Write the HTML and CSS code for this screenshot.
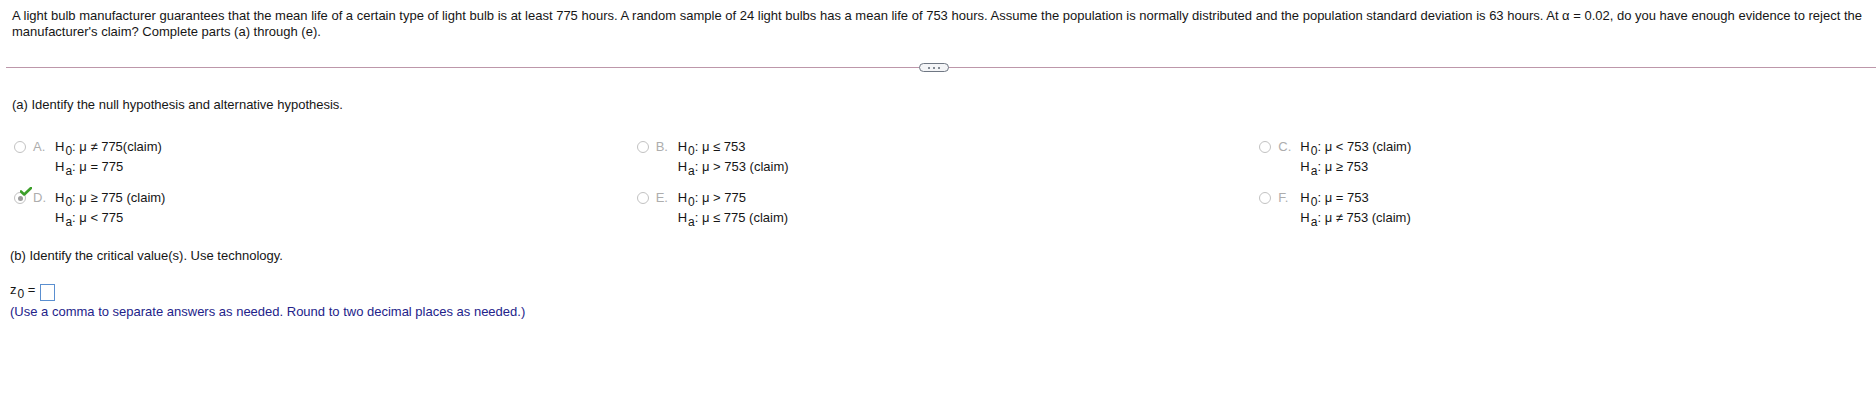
FILE: index.html
```html
<!DOCTYPE html>
<html lang="en">
<head>
<meta charset="utf-8">
<title>Hypothesis test</title>
<link rel="stylesheet" href="styles.css">
</head>
<body>
<div class="page">
  <p class="question">A light bulb manufacturer guarantees that the mean life of a certain type of light bulb is at least 775 hours. A random sample of 24 light bulbs has a mean life of 753 hours. Assume the population is normally distributed and the population standard deviation is 63 hours. At α = 0.02, do you have enough evidence to reject the manufacturer's claim? Complete parts (a) through (e).</p>

  <div class="divider">
    <span class="pill"><i></i><i></i><i></i></span>
  </div>

  <p class="part part-a">(a) Identify the null hypothesis and alternative hypothesis.</p>

  <div class="options">
    <div class="option">
      <span class="radio"></span><span class="letter">A.</span>
      <div class="hyp">
        <div>H<sub>0</sub>: μ ≠ 775(claim)</div>
        <div>H<sub>a</sub>: μ = 775</div>
      </div>
    </div>
    <div class="option">
      <span class="radio"></span><span class="letter">B.</span>
      <div class="hyp">
        <div>H<sub>0</sub>: μ ≤ 753</div>
        <div>H<sub>a</sub>: μ &gt; 753 (claim)</div>
      </div>
    </div>
    <div class="option">
      <span class="radio"></span><span class="letter">C.</span>
      <div class="hyp">
        <div>H<sub>0</sub>: μ &lt; 753 (claim)</div>
        <div>H<sub>a</sub>: μ ≥ 753</div>
      </div>
    </div>
    <div class="option">
      <span class="radio selected">
        <svg class="check" viewBox="0 0 12 9" width="12" height="9"><path d="M1 4.5 L4.2 7.5 L11 1" fill="none" stroke="#3c9f2a" stroke-width="2.6" stroke-linecap="round" stroke-linejoin="round"/></svg>
      </span><span class="letter">D.</span>
      <div class="hyp">
        <div>H<sub>0</sub>: μ ≥ 775 (claim)</div>
        <div>H<sub>a</sub>: μ &lt; 775</div>
      </div>
    </div>
    <div class="option">
      <span class="radio"></span><span class="letter">E.</span>
      <div class="hyp">
        <div>H<sub>0</sub>: μ &gt; 775</div>
        <div>H<sub>a</sub>: μ ≤ 775 (claim)</div>
      </div>
    </div>
    <div class="option">
      <span class="radio"></span><span class="letter">F.</span>
      <div class="hyp">
        <div>H<sub>0</sub>: μ = 753</div>
        <div>H<sub>a</sub>: μ ≠ 753 (claim)</div>
      </div>
    </div>
  </div>

  <p class="part part-b">(b) Identify the critical value(s). Use technology.</p>

  <div class="answer">z<sub>0</sub> = <span class="box"></span></div>
  <p class="hint">(Use a comma to separate answers as needed. Round to two decimal places as needed.)</p>
</div>
</body>
</html>
```

FILE: styles.css
```css
html, body {
  margin: 0;
  background: #ffffff;
}

body {
  font-family: "Liberation Sans", Arial, sans-serif;
  font-size: 13px;
  color: #161616;
}

.page {
  padding-top: 8px;
}

.question {
  margin: 0;
  padding: 0 10px 0 12px;
  line-height: 16px;
}

.divider {
  margin: 27px 0 0 6px;
  height: 1px;
  background: #bd97aa;
  display: flex;
  justify-content: center;
  align-items: center;
  padding-right: 15px;
}

.pill {
  display: flex;
  gap: 3px;
  justify-content: center;
  align-items: center;
  width: 28px;
  height: 7px;
  border: 1.5px solid #6f7783;
  border-radius: 6px;
  background: #f4f5f7;
}

.pill i {
  display: block;
  width: 2px;
  height: 2px;
  background: #5f6773;
  border-radius: 1px;
}

.part {
  margin: 0;
  line-height: 16px;
}

.part-a {
  margin-top: 29px;
  padding-left: 12px;
}

.options {
  margin: 24px 0 0 8px;
  display: grid;
  grid-template-columns: repeat(3, 1fr);
  row-gap: 11px;
}

.option {
  display: flex;
  align-items: flex-start;
  padding-left: 6px;
  line-height: 20px;
}

.radio {
  position: relative;
  flex: none;
  width: 10px;
  height: 10px;
  margin-top: 4px;
  margin-right: 7px;
  border: 1.5px solid #c2c2c2;
  border-radius: 50%;
  background: #fff;
}

.radio.selected::after {
  content: "";
  position: absolute;
  left: 2.5px;
  top: 2.5px;
  width: 5px;
  height: 5px;
  border-radius: 50%;
  background: #9b9b9b;
}

.check {
  position: absolute;
  left: 5px;
  top: -6px;
  z-index: 1;
}

.letter {
  flex: none;
  width: 22px;
  color: #adadad;
}

.hyp div {
  white-space: nowrap;
}

sub {
  font-size: 12px;
  line-height: 0;
  vertical-align: -4px;
  margin-left: 1px;
}

.part-b {
  margin-top: 20px;
  padding-left: 10px;
}

.answer {
  margin-top: 16px;
  padding-left: 10px;
  line-height: 20px;
}

.box {
  display: inline-block;
  width: 13px;
  height: 15px;
  border: 1px solid #5a8fd0;
  vertical-align: -7px;
  margin-left: 1px;
}

.hint {
  margin: 3px 0 0 0;
  padding-left: 10px;
  line-height: 16px;
  color: #23238a;
}
```
